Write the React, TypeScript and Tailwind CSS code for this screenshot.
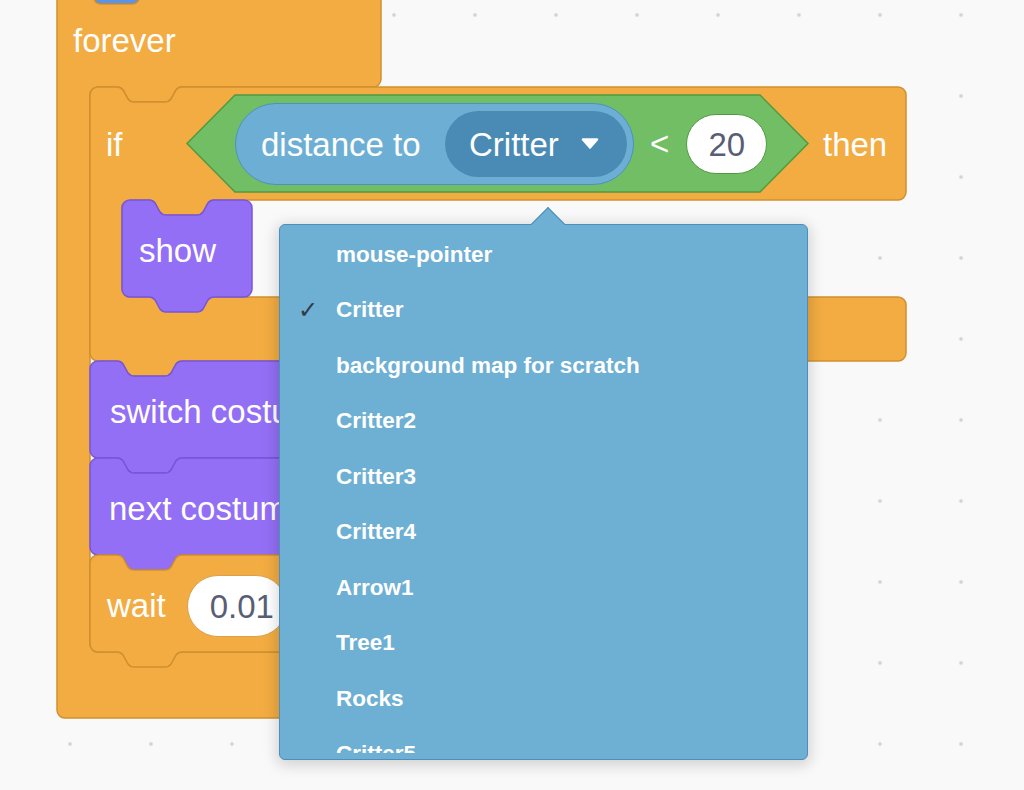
import React from "react";

const R = 8;
const NX = 27;

function notchR(x: number, y: number) {
  return `H ${x} C ${x + 3} ${y} ${x + 4.5} ${y + 1} ${x + 6} ${y + 3} L ${x + 11} ${y + 12} C ${x + 12.5} ${y + 14} ${x + 14} ${y + 15} ${x + 17} ${y + 15} H ${x + 48} C ${x + 51} ${y + 15} ${x + 52.5} ${y + 14} ${x + 54} ${y + 12} L ${x + 59} ${y + 3} C ${x + 60.5} ${y + 1} ${x + 62} ${y} ${x + 65} ${y}`;
}

function notchL(x: number, y: number) {
  return `H ${x + 65} C ${x + 62} ${y} ${x + 60.5} ${y + 1} ${x + 59} ${y + 3} L ${x + 54} ${y + 12} C ${x + 52.5} ${y + 14} ${x + 51} ${y + 15} ${x + 48} ${y + 15} H ${x + 17} C ${x + 14} ${y + 15} ${x + 12.5} ${y + 14} ${x + 11} ${y + 12} L ${x + 6} ${y + 3} C ${x + 4.5} ${y + 1} ${x + 3} ${y} ${x} ${y}`;
}

function stackPath(w: number, h: number) {
  return `M 0 ${R} A ${R} ${R} 0 0 1 ${R} 0 ${notchR(NX, 0)} H ${w - R} A ${R} ${R} 0 0 1 ${w} ${R} V ${h - R} A ${R} ${R} 0 0 1 ${w - R} ${h} ${notchL(NX, h)} H ${R} A ${R} ${R} 0 0 1 0 ${h - R} Z`;
}

// C-shaped block: top arm h1, mouth of height inner, bottom arm of height arm
function cPath(w: number, h1: number, col: number, inner: number, arm: number, tab: boolean) {
  const y2 = h1 + inner;
  const total = y2 + arm;
  return `M 0 ${R} A ${R} ${R} 0 0 1 ${R} 0 ${notchR(NX, 0)} H ${w - R} A ${R} ${R} 0 0 1 ${w} ${R} V ${h1 - R} A ${R} ${R} 0 0 1 ${w - R} ${h1} ${notchL(col + NX, h1)} H ${col + R} A ${R} ${R} 0 0 0 ${col} ${h1 + R} V ${y2 - R} A ${R} ${R} 0 0 0 ${col + R} ${y2} H ${w - R} A ${R} ${R} 0 0 1 ${w} ${y2 + R} V ${total - R} A ${R} ${R} 0 0 1 ${w - R} ${total} ${tab ? notchL(NX, total) : ""} H ${R} A ${R} ${R} 0 0 1 0 ${total - R} Z`;
}

const orange = "fill-[#f2ac42] stroke-[#cf902f]";
const purple = "fill-[#936ff5] stroke-[#7856d8]";
const motion = "fill-[#5b93e8] stroke-[#4576cc]";

function Shape({ d, w, h, className }: { d: string; w: number; h: number; className: string }) {
  return (
    <svg width={w} height={h} className="pointer-events-none absolute left-0 top-0 overflow-visible">
      <path d={d} className={className} strokeWidth="1.5" />
    </svg>
  );
}

function Statement({ w, color, children }: { w: number; color: string; children?: React.ReactNode }) {
  return (
    <div className="relative">
      <Shape d={stackPath(w, 97)} w={w} h={97} className={color} />
      <div className="relative flex h-[97px] items-center pt-[4px]">{children}</div>
    </div>
  );
}

function Caret() {
  return (
    <svg width="18" height="11" viewBox="0 0 18 11">
      <path d="M2 1.5 H16 L9 9.5 Z" fill="white" stroke="white" strokeWidth="2.5" strokeLinejoin="round" />
    </svg>
  );
}

function Condition() {
  return (
    <div className="relative h-[97px] w-[621px]">
      <Shape d="M 48 0 H 573 L 621 48.5 L 573 97 H 48 L 0 48.5 Z" w={621} h={97} className="fill-[#72be64] stroke-[#4f9b43]" />
      <div className="relative flex h-[97px] items-center pl-[48px]">
        <div className="flex h-[82px] w-[399px] items-center justify-between rounded-full border-[1.5px] border-[#4c91c2] bg-[#6dafd4] pl-[25px] pr-[6px]">
          <span className="pt-[1px]">distance to</span>
          <div className="flex h-[66px] w-[182px] items-center justify-between rounded-full bg-[#4a8bb5] pl-[24px] pr-[28px]">
            <span className="pt-[1px]">Critter</span>
            <Caret />
          </div>
        </div>
        <span className="ml-[16px]">&lt;</span>
        <div className="ml-[17px] flex h-[60px] w-[81px] items-center justify-center rounded-full border border-[#4f9b43] bg-white pt-[1px] text-[#575e75]">
          20
        </div>
      </div>
    </div>
  );
}

function IfBlock() {
  return (
    <div className="relative">
      <Shape d={cPath(816, 113, 32, 97, 64, true)} w={816} h={274} className={orange} />
      <div className="relative flex h-[113px] items-center pl-[16px]">
        <span className="w-[81px] pt-[2px]">if</span>
        <Condition />
        <span className="ml-[15px] pt-[2px]">then</span>
      </div>
      <div className="relative ml-[32px] flex flex-col items-start">
        <Statement w={130} color={purple}>
          <span className="pl-[17px]">show</span>
        </Statement>
      </div>
      <div className="h-[64px]" />
    </div>
  );
}

const targets = [
  "mouse-pointer",
  "Critter",
  "background map for scratch",
  "Critter2",
  "Critter3",
  "Critter4",
  "Arrow1",
  "Tree1",
  "Rocks",
  "Critter5",
];

export default function App() {
  return (
    <div className="relative h-[790px] w-[1024px] overflow-hidden bg-[#f9f9f9] bg-[radial-gradient(circle,#d2d2d2_1.6px,transparent_2.2px)] bg-size-[81px_81px] bg-position-[29.5px_55.5px] font-['Liberation_Sans',Arial,sans-serif] text-[33px] leading-none text-white">
      {/* script */}
      <div className="absolute left-[57px] top-[-108px] flex flex-col items-start">
        <Statement w={324} color={motion} />
        <div className="relative">
          <Shape d={cPath(324, 98, 33, 565, 66, false)} w={324} h={729} className={orange} />
          <div className="relative flex h-[98px] items-center pl-[16px] pt-[5px]">forever</div>
          <div className="relative ml-[33px] flex flex-col items-start">
            <IfBlock />
            <Statement w={420} color={purple}>
              <span className="whitespace-nowrap pl-[20px]">switch costume to</span>
            </Statement>
            <Statement w={300} color={purple}>
              <span className="whitespace-nowrap pl-[19px]">next costume</span>
            </Statement>
            <Statement w={300} color={orange}>
              <span className="pl-[17px]">wait</span>
              <div className="ml-[21px] flex h-[62px] w-[100px] items-center rounded-full border border-[#d7a14f] bg-white pl-[22px] pt-[1px] text-[#575e75]">
                0.01
              </div>
            </Statement>
          </div>
          <div className="h-[66px]" />
        </div>
      </div>

      {/* target dropdown */}
      <div className="absolute left-[279px] top-[224px] h-[536px] w-[529px] rounded-[6px] border border-[#4d8ebc] bg-[#6eafd4] shadow-[0_3px_14px_3px_rgba(0,0,0,0.15)]">
        <div className="h-[528px] overflow-hidden pt-[2px]">
          {targets.map((t) => (
            <div key={t} className="flex h-[55.5px] items-center text-[22.5px] font-bold text-white">
              <span className="w-[56px] pl-[18px] font-['DejaVu_Sans',sans-serif] text-[24px] font-bold text-[#333a44]">
                {t === "Critter" ? "✓" : ""}
              </span>
              <span>{t}</span>
            </div>
          ))}
        </div>
        <div className="absolute left-[256px] top-[-13px] h-[24px] w-[24px] rotate-45 border-l border-t border-[#4d8ebc] bg-[#6eafd4]" />
      </div>
    </div>
  );
}
